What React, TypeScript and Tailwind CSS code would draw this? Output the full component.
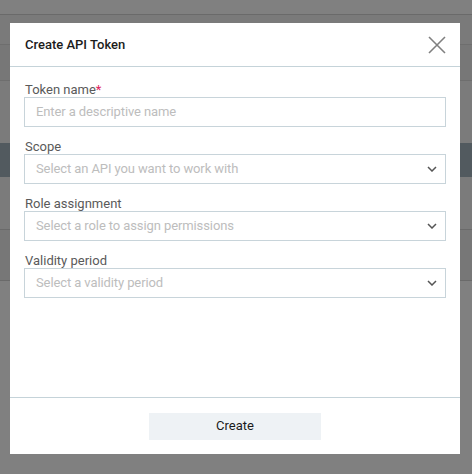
import React from 'react';

const fields = [
  { label: 'Token name', required: true, placeholder: 'Enter a descriptive name', select: false },
  { label: 'Scope', placeholder: 'Select an API you want to work with', select: true },
  { label: 'Role assignment', placeholder: 'Select a role to assign permissions', select: true },
  { label: 'Validity period', placeholder: 'Select a validity period', select: true },
];

const Chevron = () => (
  <svg width="10" height="6" viewBox="0 0 10 6" fill="none" stroke="#555" strokeWidth="1.5">
    <path d="M1 1l4 4 4-4" />
  </svg>
);

const App: React.FC = () => {
  return (
    <div className="relative w-[472px] h-[474px] overflow-hidden bg-[#808080]" style={{ fontFamily: 'Roboto, "Open Sans", sans-serif' }}>
      {/* page behind the overlay */}
      <div className="flex flex-col">
        <div className="h-[14px] bg-[#808080]" />
        <div className="h-[30px] border-t border-[#6a6a6a] bg-[#7a7a7a]" />
        <div className="h-[36px] border-t border-[#6e6e6e] bg-[#777777]" />
        <div className="h-[63px] border-t border-[#6e6e6e] bg-[#7b7b7b]" />
        <div className="h-[34px] bg-[#525a5f]" />
        <div className="h-[52px] bg-[#7b7b7b]" />
        <div className="h-[51px] border-t border-[#6a6a6a] bg-[#777777]" />
        <div className="h-[194px] border-t border-[#6a6a6a] bg-[#808080]" />
      </div>

      {/* modal */}
      <div className="absolute left-[10px] top-[23px] w-[450px] h-[431px] bg-white flex flex-col">
        <div className="h-[44px] flex items-center justify-between pl-[15px] pr-[14px] border-b border-[#c5d3d9]">
          <h2 className="text-[13px] font-medium text-[#1b1b1b]">Create API Token</h2>
          <svg width="18" height="18" viewBox="0 0 18 18" stroke="#808080" strokeWidth="1.6">
            <path d="M1 1l16 16M17 1L1 17" />
          </svg>
        </div>

        <div className="flex-1 px-[14px] pt-[12px] flex flex-col gap-[9px]">
          {fields.map((f) => (
            <div key={f.label} className="flex flex-col">
              <label className="h-[18px] text-[13px] leading-[21px] text-[#5a5a5a] pl-px">
                {f.label}
                {f.required && <span className="text-[#e0245e]">*</span>}
              </label>
              <div className="h-[30px] border border-[#c8d4da] flex items-center justify-between pl-[11px] pr-[8px]">
                <span className="text-[13px] tracking-[-0.1px] text-[#bdbdbd]">{f.placeholder}</span>
                {f.select && <Chevron />}
              </div>
            </div>
          ))}
        </div>

        <div className="h-[57px] border-t border-[#c5d3d9] flex items-center justify-center">
          <button className="w-[172px] h-[27px] bg-[#eef2f5] text-[13px] text-[#1b1b1b]">Create</button>
        </div>
      </div>
    </div>
  );
};

export default App;
